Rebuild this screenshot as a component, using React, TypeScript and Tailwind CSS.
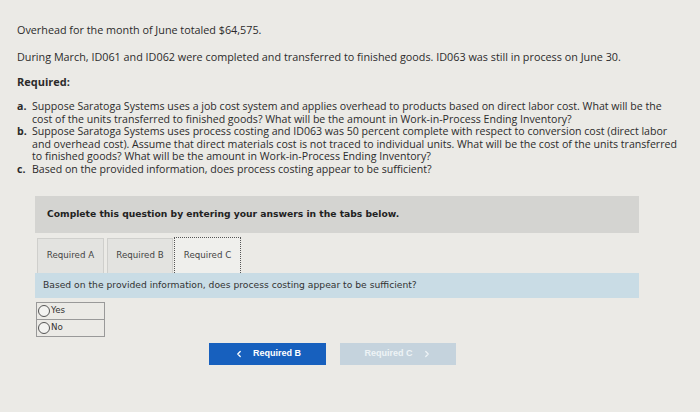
import { ChevronLeft, ChevronRight } from 'lucide-react';

const items = [
  {
    label: 'a.',
    text: 'Suppose Saratoga Systems uses a job cost system and applies overhead to products based on direct labor cost. What will be the cost of the units transferred to finished goods? What will be the amount in Work-in-Process Ending Inventory?',
  },
  {
    label: 'b.',
    text: 'Suppose Saratoga Systems uses process costing and ID063 was 50 percent complete with respect to conversion cost (direct labor and overhead cost). Assume that direct materials cost is not traced to individual units. What will be the cost of the units transferred to finished goods? What will be the amount in Work-in-Process Ending Inventory?',
  },
  {
    label: 'c.',
    text: 'Based on the provided information, does process costing appear to be sufficient?',
  },
];

export default function App() {
  return (
    <main className="h-[412px] w-[700px] overflow-hidden bg-[#ebeae6] px-[17px] pt-[22px] text-[#2b2b2b]">
      <div className="font-['Open_Sans',sans-serif]">
        <p className="text-[10.8px] leading-[16px]">Overhead for the month of June totaled $64,575.</p>
        <p className="mt-[11px] text-[10.8px] leading-[16px]">
          During March, ID061 and ID062 were completed and transferred to finished goods. ID063 was still in process on June 30.
        </p>
        <p className="mt-[9px] text-[11px] font-bold leading-[16px]">Required:</p>
        <ol className="mt-[10px] pr-[4px] text-[10.6px] leading-[12.6px]">
          {items.map((item) => (
            <li key={item.label} className="flex">
              <span className="w-[15px] shrink-0 font-bold">{item.label}</span>
              <span>{item.text}</span>
            </li>
          ))}
        </ol>
      </div>

      <section className="ml-[18px] mt-[20px] w-[604px] font-['DejaVu_Sans',sans-serif]">
        <div className="flex h-[37px] items-center bg-[#d4d4d1] px-[12px] text-[9.2px] font-bold text-[#222]">
          Complete this question by entering your answers in the tabs below.
        </div>

        <div className="mt-[4px] flex items-end gap-[3px] pl-[2px]">
          <div className="flex h-[35px] w-[67px] items-center justify-center border border-b-0 border-[#cfcfcc] bg-[#e3e3e0] text-[8.7px] text-[#444]">
            Required A
          </div>
          <div className="flex h-[35px] w-[66px] items-center justify-center border border-b-0 border-[#cfcfcc] bg-[#e3e3e0] text-[8.7px] text-[#444]">
            Required B
          </div>
          <div className="-ml-[2px] flex h-[36px] w-[67px] items-center justify-center border border-b-0 border-dotted border-[#555] bg-[#efefec] text-[8.7px] text-[#444]">
            Required C
          </div>
        </div>

        <div className="flex h-[25px] items-center bg-[#c9dce5] px-[8px] text-[9.2px] text-[#333]">
          Based on the provided information, does process costing appear to be sufficient?
        </div>

        <div className="mt-[4px] ml-[1px] w-[69px] border border-[#999] text-[8.7px] text-[#333]">
          <label className="flex h-[17px] items-center gap-[1px] border-b border-[#999] pl-[1px]">
            <span className="h-[12px] w-[12px] rounded-full border border-[#555] bg-[#f3f3f1]" />
            Yes
          </label>
          <label className="flex h-[16px] items-center gap-[1px] pl-[1px]">
            <span className="h-[12px] w-[12px] rounded-full border border-[#555] bg-[#f3f3f1]" />
            No
          </label>
        </div>

        <div className="mt-[6px] flex gap-[14px] pl-[174px] font-['Liberation_Sans',sans-serif]">
          <button className="flex h-[22px] w-[117px] items-center justify-center gap-[9px] bg-[#1760be] text-[9px] font-bold text-white">
            <ChevronLeft size={10} strokeWidth={3} />
            Required B
          </button>
          <button className="flex h-[22px] w-[116px] items-center justify-center gap-[9px] bg-[#c5d3dd] text-[9px] font-bold text-[#eef3f6]">
            Required C
            <ChevronRight size={10} strokeWidth={3} />
          </button>
        </div>
      </section>
    </main>
  );
}
